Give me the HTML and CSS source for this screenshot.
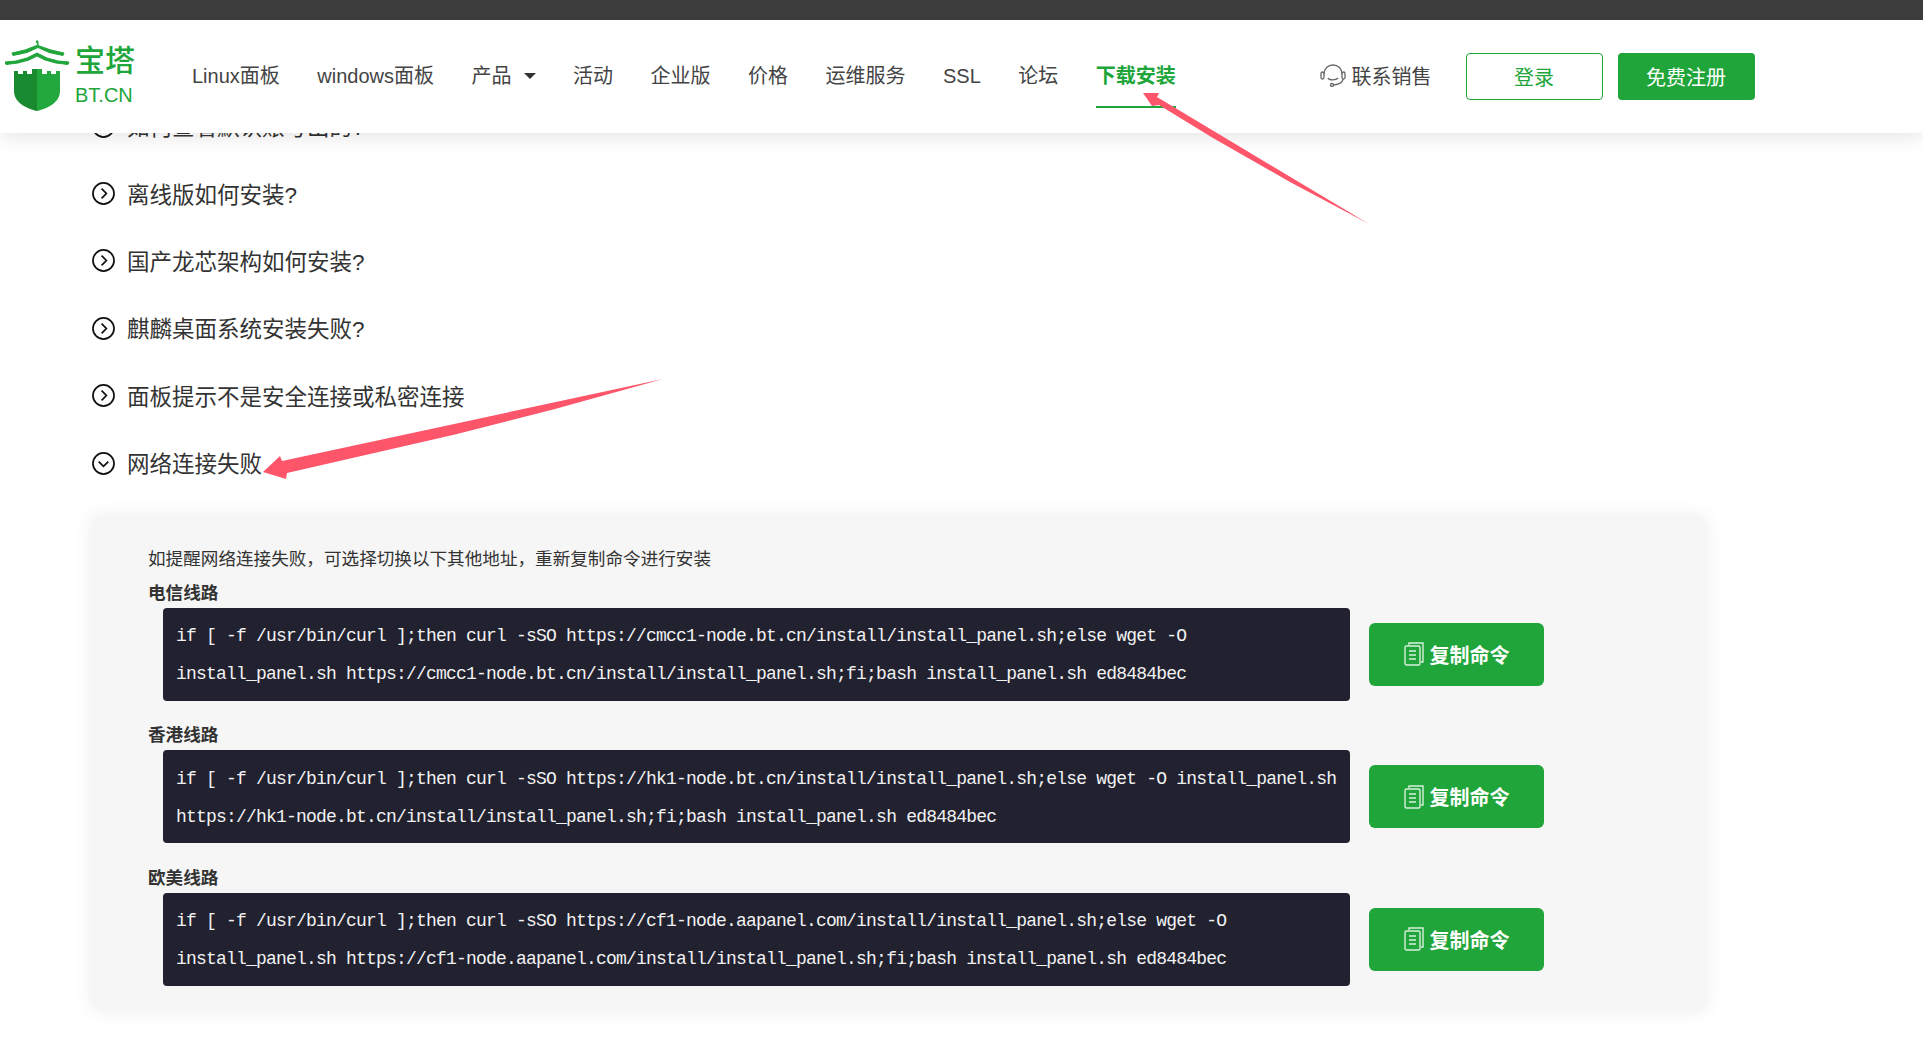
FILE: index.html
```html
<!DOCTYPE html>
<html lang="zh-CN">
<head>
    <meta charset="UTF-8">
    <meta name="viewport" content="width=device-width, initial-scale=1.0">
    <title>宝塔面板下载安装</title>
    <link rel="stylesheet" href="styles.css">
</head>
<body>
    <!-- Fixed header -->
    <div class="site-top">
        <div class="top-strip"></div>
        <div class="navbar">
            <a href="#" class="logo">
                <svg class="logo-mark" width="66" height="72" viewBox="0 0 66 72">
                    <path class="logo-roof" d="M31 1h2v4.500L46 10l13 3-1 2.500-14-3-11-5-11 5-14 3-1-2.500 13-3 13-5z"/>
                    <path class="logo-roof" d="M32 13l10 5 11 3 11 1-1 2.500-12-1.500-11-3-8-4-8 4-11 3-12 1.500-1-2.500 11-1 11-3z"/>
                    <path d="M32 27v44C20 68 9 62 9 51V31h4v3h5v-3h4v3h5v-5h5z" fill="#198a30"/>
                    <path d="M32 27v44c12-3 23-9 23-20V31h-4v3h-5v-3h-4v3h-5v-5h-5z" fill="#22a83c"/>
                </svg>
                <span class="logo-text">
                    <span class="logo-name">宝塔</span>
                    <span class="logo-domain">BT.CN</span>
                </span>
            </a>
            <div class="nav-links">
                <a href="#">Linux面板</a>
                <a href="#">windows面板</a>
                <a href="#" class="has-caret">产品</a>
                <a href="#">活动</a>
                <a href="#">企业版</a>
                <a href="#">价格</a>
                <a href="#">运维服务</a>
                <a href="#">SSL</a>
                <a href="#">论坛</a>
                <a href="#" class="active">下载安装</a>
            </div>
            <a href="#" class="contact">
                <svg width="26" height="23" viewBox="0 0 26 23" fill="none" stroke="#666" stroke-width="1.3">
                    <path d="M4 10C4 4.500 8 1 13 1s9 3.500 9 9"/>
                    <rect x="1" y="8" width="3" height="7" rx="1.500"/>
                    <rect x="22" y="8" width="3" height="7" rx="1.500"/>
                    <path d="M8 14c1 2.500 8 2.500 10 0"/>
                    <path d="M23 15c0 3-3 5-9 6"/>
                    <circle cx="12" cy="21" r="1.500"/>
                </svg>
                联系销售
            </a>
            <a href="#" class="btn-login">登录</a>
            <a href="#" class="btn-register">免费注册</a>
        </div>
    </div>

    <!-- Question list -->
    <div class="content">
        <div class="faq-row">
            <svg class="faq-icon" viewBox="0 0 24 24"><circle cx="12" cy="12" r="11"/><path d="M10 7l5 5-5 5"/></svg>
            <span>如何查看默认账号出的?</span>
        </div>
        <div class="faq-row">
            <svg class="faq-icon" viewBox="0 0 24 24"><circle cx="12" cy="12" r="11"/><path d="M10 7l5 5-5 5"/></svg>
            <span>离线版如何安装?</span>
        </div>
        <div class="faq-row">
            <svg class="faq-icon" viewBox="0 0 24 24"><circle cx="12" cy="12" r="11"/><path d="M10 7l5 5-5 5"/></svg>
            <span>国产龙芯架构如何安装?</span>
        </div>
        <div class="faq-row">
            <svg class="faq-icon" viewBox="0 0 24 24"><circle cx="12" cy="12" r="11"/><path d="M10 7l5 5-5 5"/></svg>
            <span>麒麟桌面系统安装失败?</span>
        </div>
        <div class="faq-row">
            <svg class="faq-icon" viewBox="0 0 24 24"><circle cx="12" cy="12" r="11"/><path d="M10 7l5 5-5 5"/></svg>
            <span>面板提示不是安全连接或私密连接</span>
        </div>
        <div class="faq-row">
            <svg class="faq-icon" viewBox="0 0 24 24"><circle cx="12" cy="12" r="11"/><path d="M7 10l5 5 5-5"/></svg>
            <span>网络连接失败</span>
        </div>

        <div class="panel">
            <p class="panel-intro">如提醒网络连接失败，可选择切换以下其他地址，重新复制命令进行安装</p>

            <div class="line-block">
                <div class="line-name">电信线路</div>
                <div class="line-row">
                    <div class="command">if [ -f /usr/bin/curl ];then curl -sSO https://cmcc1-node.bt.cn/install/install_panel.sh;else wget -O install_panel.sh https://cmcc1-node.bt.cn/install/install_panel.sh;fi;bash install_panel.sh ed8484bec</div>
                    <a href="#" class="btn-copy">
                        <svg class="copy-icon" viewBox="0 0 20 24"><path d="M5 3V1h14v19h-2"/><rect x="1" y="4" width="15" height="19" rx="1.500"/><path d="M5 9h7M5 13h7M5 17h7"/></svg>
                        复制命令
                    </a>
                </div>
            </div>

            <div class="line-block">
                <div class="line-name">香港线路</div>
                <div class="line-row">
                    <div class="command">if [ -f /usr/bin/curl ];then curl -sSO https://hk1-node.bt.cn/install/install_panel.sh;else wget -O install_panel.sh https://hk1-node.bt.cn/install/install_panel.sh;fi;bash install_panel.sh ed8484bec</div>
                    <a href="#" class="btn-copy">
                        <svg class="copy-icon" viewBox="0 0 20 24"><path d="M5 3V1h14v19h-2"/><rect x="1" y="4" width="15" height="19" rx="1.500"/><path d="M5 9h7M5 13h7M5 17h7"/></svg>
                        复制命令
                    </a>
                </div>
            </div>

            <div class="line-block">
                <div class="line-name">欧美线路</div>
                <div class="line-row">
                    <div class="command">if [ -f /usr/bin/curl ];then curl -sSO https://cf1-node.aapanel.com/install/install_panel.sh;else wget -O install_panel.sh https://cf1-node.aapanel.com/install/install_panel.sh;fi;bash install_panel.sh ed8484bec</div>
                    <a href="#" class="btn-copy">
                        <svg class="copy-icon" viewBox="0 0 20 24"><path d="M5 3V1h14v19h-2"/><rect x="1" y="4" width="15" height="19" rx="1.500"/><path d="M5 9h7M5 13h7M5 17h7"/></svg>
                        复制命令
                    </a>
                </div>
            </div>
        </div>
    </div>

    <!-- Red annotation arrows drawn over the page -->
    <svg class="arrows" width="1923" height="1041" viewBox="0 0 1923 1041">
        <polygon points="1143,93 1159,93 1157,97 1369,224 1290,182 1213,138 1159,105 1152,106"/>
        <polygon points="263,472 280,456 282,461 663,379 555,409 455,434.500 287,473 286,479"/>
    </svg>
</body>
</html>
```

FILE: styles.css
```css
body {
    font-family: "Liberation Sans", "Noto Sans CJK SC", sans-serif;
    margin: 0;
    padding: 0;
    background-color: #fff;
    color: #333;
}
a {
    color: inherit;
    text-decoration: none;
}
/* Header */
.site-top {
    position: fixed;
    top: 0;
    left: 0;
    right: 0;
    z-index: 5;
    box-shadow: 0 2px 20px rgba(0, 0, 0, 0.12);
}
.top-strip {
    height: 20px;
    background-color: #3c3c3c;
}
.navbar {
    height: 113px;
    box-sizing: border-box;
    background-color: #fff;
    display: flex;
    align-items: center;
    padding: 0 168.500px 0 5px;
    font-size: 20px;
    color: #444;
}
.logo {
    display: flex;
    align-items: center;
    gap: 4px;
    width: 187px;
    margin-top: -2px;
}
.logo-roof {
    fill: #20a53a;
    stroke: #20a53a;
    stroke-width: 1;
}
.logo-text {
    display: flex;
    flex-direction: column;
    color: #20a53a;
}
.logo-name {
    font-size: 30px;
    line-height: 38px;
    font-weight: 500;
}
.logo-domain {
    font-size: 20px;
    line-height: 30px;
}
.nav-links {
    display: flex;
    align-items: center;
    gap: 37.500px;
}
.nav-links a {
    line-height: 30px;
    padding: 15px 0;
    border-bottom: 2px solid transparent;
}
.nav-links a.active {
    color: #20a53a;
    font-weight: bold;
    border-bottom-color: #20a53a;
}
.has-caret::after {
    content: "";
    display: inline-block;
    margin-left: 12px;
    vertical-align: 4px;
    border-left: 6px solid transparent;
    border-right: 6px solid transparent;
    border-top: 6px solid #333;
}
.contact {
    margin-left: auto;
    display: flex;
    align-items: center;
    gap: 6px;
    margin-right: 34px;
    margin-top: -2px;
}
.btn-login, .btn-register {
    width: 137px;
    height: 47px;
    box-sizing: border-box;
    display: flex;
    align-items: center;
    justify-content: center;
    border-radius: 4px;
}
.btn-login {
    border: 1px solid #20a53a;
    color: #20a53a;
    margin-right: 15px;
}
.btn-register {
    background-color: #20a53a;
    color: #fff;
}
/* Question list */
.content {
    padding: 92.500px 217px 30px 92px;
}
.faq-row {
    height: 67.400px;
    display: flex;
    align-items: center;
    gap: 12px;
    font-size: 22.500px;
}
.faq-row span {
    padding-bottom: 2px;
}
.faq-icon {
    width: 23px;
    height: 23px;
    fill: none;
    stroke: #111;
    stroke-width: 1.8;
}
/* Install lines panel */
.panel {
    margin-top: 19px;
    background-color: #f6f6f6;
    border-radius: 8px;
    box-shadow: 0 0 20px rgba(0, 0, 0, 0.08);
    padding: 30px 56px 24px;
    font-size: 17.600px;
}
.panel-intro {
    margin: 0 0 8px;
    line-height: 26px;
}
.line-name {
    font-weight: bold;
    line-height: 26px;
    margin-bottom: 2px;
}
.line-block {
    margin-bottom: 21.500px;
}
.line-block:last-child {
    margin-bottom: 0;
}
.line-row {
    display: flex;
    align-items: center;
    gap: 19px;
    margin-left: 15px;
}
.command {
    width: 1187px;
    box-sizing: border-box;
    padding: 9.500px 11px 7.500px 13px;
    background-color: #212130;
    border-radius: 4px;
    color: #f2f2f2;
    font-family: "Liberation Mono", monospace;
    font-size: 18px;
    letter-spacing: -0.800px;
    line-height: 38px;
}
.btn-copy {
    width: 175px;
    height: 63px;
    display: flex;
    align-items: center;
    justify-content: center;
    gap: 6px;
    background-color: #20a53a;
    border-radius: 6px;
    color: #fff;
    font-size: 20px;
    font-weight: bold;
}
.copy-icon {
    width: 20px;
    height: 24px;
    fill: none;
    stroke: #d9f0dd;
    stroke-width: 1.4;
}
.arrows {
    position: absolute;
    top: 0;
    left: 0;
    z-index: 10;
    pointer-events: none;
    fill: #fd566b;
}
```
